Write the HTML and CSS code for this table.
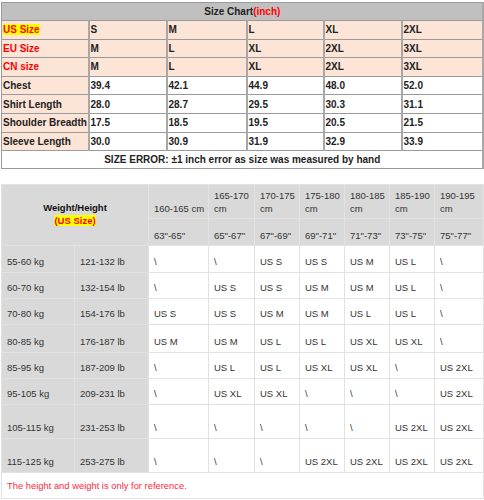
FILE: index.html
```html
<!DOCTYPE html>
<html>
<head>
<meta charset="utf-8">
<link rel="stylesheet" href="styles.css">
</head>
<body>
<div class="page">
<table class="chart">
  <colgroup>
    <col class="c0"><col class="c1"><col class="c2"><col class="c3"><col class="c4"><col class="c5">
  </colgroup>
  <tr class="title"><td colspan="6">Size Chart<span class="red">(inch)</span></td></tr>
  <tr class="peach"><td><span class="hl">US Size</span></td><td>S</td><td>M</td><td>L</td><td>XL</td><td>2XL</td></tr>
  <tr class="peach"><td><span class="red">EU Size</span></td><td>M</td><td>L</td><td>XL</td><td>2XL</td><td>3XL</td></tr>
  <tr class="peach"><td><span class="red">CN size</span></td><td>M</td><td>L</td><td>XL</td><td>2XL</td><td>3XL</td></tr>
  <tr><td class="lbl">Chest</td><td>39.4</td><td>42.1</td><td>44.9</td><td>48.0</td><td>52.0</td></tr>
  <tr><td class="lbl">Shirt Length</td><td>28.0</td><td>28.7</td><td>29.5</td><td>30.3</td><td>31.1</td></tr>
  <tr><td class="lbl">Shoulder Breadth</td><td>17.5</td><td>18.5</td><td>19.5</td><td>20.5</td><td>21.5</td></tr>
  <tr><td class="lbl">Sleeve Length</td><td>30.0</td><td>30.9</td><td>31.9</td><td>32.9</td><td>33.9</td></tr>
  <tr class="note"><td colspan="6">SIZE ERROR: ±1 inch error as size was measured by hand</td></tr>
</table>

<table class="wh">
  <colgroup>
    <col class="w0"><col class="w1"><col class="w2"><col class="w3"><col class="w4"><col class="w5"><col class="w6"><col class="w7"><col class="w8">
  </colgroup>
  <tr class="h1">
    <td colspan="2" rowspan="2" class="corner"><b>Weight/Height</b><br><span class="ussize">(US Size)</span></td>
    <td>160-165 cm</td><td>165-170 cm</td><td>170-175 cm</td><td>175-180 cm</td><td>180-185 cm</td><td>185-190 cm</td><td>190-195 cm</td>
  </tr>
  <tr class="h2">
    <td>63"-65"</td><td>65"-67"</td><td>67"-69"</td><td>69"-71"</td><td>71"-73"</td><td>73"-75"</td><td>75"-77"</td>
  </tr>
  <tr class="r ra"><th>55-60 kg</th><th>121-132 lb</th><td>\</td><td>\</td><td>US S</td><td>US S</td><td>US M</td><td>US L</td><td>\</td></tr>
  <tr class="r"><th>60-70 kg</th><th>132-154 lb</th><td>\</td><td>US S</td><td>US S</td><td>US M</td><td>US M</td><td>US L</td><td>\</td></tr>
  <tr class="r"><th>70-80 kg</th><th>154-176 lb</th><td>US S</td><td>US S</td><td>US M</td><td>US M</td><td>US L</td><td>US L</td><td>\</td></tr>
  <tr class="r rc"><th>80-85 kg</th><th>176-187 lb</th><td>US M</td><td>US M</td><td>US L</td><td>US L</td><td>US XL</td><td>US XL</td><td>\</td></tr>
  <tr class="r"><th>85-95 kg</th><th>187-209 lb</th><td>\</td><td>US L</td><td>US L</td><td>US XL</td><td>US XL</td><td>\</td><td>US 2XL</td></tr>
  <tr class="r"><th>95-105 kg</th><th>209-231 lb</th><td>\</td><td>US XL</td><td>US XL</td><td>\</td><td>\</td><td>\</td><td>US 2XL</td></tr>
  <tr class="r tall"><th>105-115 kg</th><th>231-253 lb</th><td>\</td><td>\</td><td>\</td><td>\</td><td>\</td><td>US 2XL</td><td>US 2XL</td></tr>
  <tr class="r tall"><th>115-125 kg</th><th>253-275 lb</th><td>\</td><td>\</td><td>\</td><td>US 2XL</td><td>US 2XL</td><td>US 2XL</td><td>US 2XL</td></tr>
  <tr class="foot"><td colspan="9">The height and weight is only for reference.</td></tr>
</table>
</div>
</body>
</html>
```

FILE: styles.css
```css
html, body {
  margin: 0;
  padding: 0;
  background: #fff;
}
.page {
  padding: 2px 2px 0 1px;
}
.chart {
  width: 481px;
  border-collapse: collapse;
  border: 1px solid #808080;
  font-family: "Liberation Sans", Arial, sans-serif;
  font-weight: bold;
  font-size: 10px;
  color: #222;
  table-layout: fixed;
}
.chart col.c0 { width: 87px; }
.chart col.c1 { width: 78px; }
.chart col.c2 { width: 80px; }
.chart col.c3 { width: 77px; }
.chart col.c4 { width: 78px; }
.chart col.c5 { width: 81px; }
.chart td {
  height: 17.6px;
  padding: 0 0 0 1px;
  border: 1px solid #9a9a9a;
  border-right: 2px solid #a8a8a8;
  white-space: nowrap;
  vertical-align: middle;
}
.chart tr.title td {
  background: #c0c0c0;
  text-align: center;
  font-size: 10px;
  height: 17px;
}
.chart tr.peach td,
.chart td.lbl {
  background: #fce4d6;
}
.chart .red { color: #ff0000; }
.chart .hl { color: #ff0000; background: #ffff00; }
.chart tr.note td {
  text-align: center;
  font-size: 10px;
  height: 17px;
  background: #fff;
}

.wh {
  margin-top: 15px;
  width: 482px;
  border-collapse: collapse;
  table-layout: fixed;
  font-family: "Liberation Sans", Arial, sans-serif;
  font-size: 9.5px;
  color: #333;
}
.wh col.w0 { width: 73px; }
.wh col.w1 { width: 74px; }
.wh col.w2 { width: 60px; }
.wh col.w3 { width: 46px; }
.wh col.w4 { width: 45px; }
.wh col.w5 { width: 45px; }
.wh col.w6 { width: 45px; }
.wh col.w7 { width: 45px; }
.wh col.w8 { width: 49px; }
.wh td, .wh th {
  border: 1px solid #e2e2e2;
  padding: 0 0 4px 5px;
  text-align: left;
  font-weight: normal;
  vertical-align: bottom;
  line-height: 13px;
}
.wh tr.h1 td, .wh tr.h2 td {
  background: #d9d9d9;
  padding-bottom: 3px;
}
.wh tr.h1 td { height: 30px; }
.wh tr.h2 td { height: 23px; }
.wh td.corner {
  text-align: center;
  vertical-align: middle;
  padding: 0;
  color: #111;
}
.wh td.corner b { font-weight: bold; }
.wh .ussize {
  color: #ff0000;
  background: #ffff00;
  font-weight: bold;
}
.wh th {
  background: #d9d9d9;
  white-space: nowrap;
}
.wh tr.r td { background: #fff; white-space: nowrap; }
.wh tr.r td, .wh tr.r th { height: 21px; }
.wh tr.ra td, .wh tr.ra th { height: 22px; }
.wh tr.rc td, .wh tr.rc th { height: 23px; }
.wh tr.tall td, .wh tr.tall th { height: 29px; }
.wh tr.foot td {
  height: 25px;
  color: #ff2840;
  background: #fff;
  vertical-align: middle;
  padding-bottom: 0;
  font-size: 9.4px;
}
```
